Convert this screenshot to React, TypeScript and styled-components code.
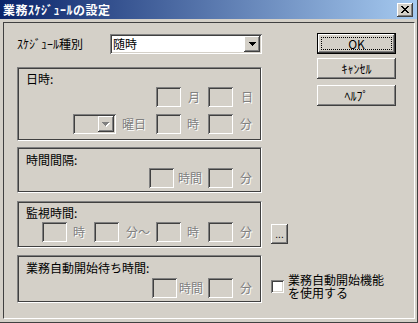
import React from "react";
import styled, { createGlobalStyle } from "styled-components";

const FACE = "#d4d0c8";
const DARK = "#404040";
const SHADOW = "#808080";

const Global = createGlobalStyle`
  html, body { margin: 0; padding: 0; background: ${FACE}; }
  body { width: 418px; height: 323px; overflow: hidden; }
`;

const Window = styled.div`
  width: 418px;
  height: 323px;
  box-sizing: border-box;
  background: ${FACE};
  display: flex;
  flex-direction: column;
  font-family: "MS UI Gothic", "Noto Sans CJK JP", sans-serif;
  font-size: 12px;
  color: #000;
  border-right: 1px solid ${DARK};
  border-bottom: 1px solid ${DARK};
`;

const TitleBar = styled.div`
  height: 19px;
  flex: none;
  background: linear-gradient(to right, #0a246a, #a6caf0);
  display: flex;
  align-items: center;
  justify-content: space-between;
  padding: 0 4px 0 3px;
`;

const Title = styled.div`
  color: #fff;
  font-weight: bold;
  font-size: 12px;
  line-height: 14px;
  letter-spacing: 0.5px;
`;

const raised = `
  box-shadow: inset -1px -1px ${DARK}, inset 1px 1px #fff, inset -2px -2px ${SHADOW}, inset 2px 2px ${FACE};
`;

const sunken = `
  box-shadow: inset 1px 1px ${SHADOW}, inset -1px -1px #fff, inset 2px 2px ${DARK}, inset -2px -2px ${FACE};
`;

const CloseBtn = styled.div`
  width: 16px;
  height: 14px;
  box-sizing: border-box;
  background: ${FACE};
  ${raised}
  display: flex;
  align-items: center;
  justify-content: center;
  padding-bottom: 1px;
`;

const Client = styled.div`
  flex: 1;
  margin: 3px 2px 3px 3px;
  border-top: 1px solid ${DARK};
  border-left: 1px solid ${DARK};
  border-right: 1px solid #fff;
  border-bottom: 1px solid #fff;
  display: grid;
  grid-template-columns: 300px 79px;
  align-content: start;
  padding: 10px 0 0 13px;
`;

const Main = styled.div`
  display: flex;
  flex-direction: column;
`;

const Side = styled.div`
  display: flex;
  flex-direction: column;
  align-self: start;
`;

const TopRow = styled.div`
  margin-top: 1px;
  height: 20px;
  display: flex;
  align-items: center;
`;

const FieldLabel = styled.div`
  width: 93px;
  line-height: 20px;
  white-space: nowrap;
`;

const Combo = styled.div<{ $w: number; $off?: boolean }>`
  width: ${(p) => p.$w}px;
  height: 20px;
  flex: none;
  box-sizing: border-box;
  background: ${(p) => (p.$off ? FACE : "#fff")};
  ${sunken}
  display: flex;
  align-items: center;
  padding: 2px 2px 2px 3px;
`;

const ComboText = styled.div`
  flex: 1;
  line-height: 16px;
`;

const DropBtn = styled.div`
  width: 16px;
  height: 16px;
  box-sizing: border-box;
  background: ${FACE};
  ${raised}
  display: flex;
  align-items: center;
  justify-content: center;
`;

const GroupLine = styled.div<{ $mt: number; $wide?: boolean }>`
  margin-top: ${(p) => p.$mt}px;
  display: flex;
  align-items: flex-end;
  ${(p) => (p.$wide ? "grid-column: 1 / -1;" : "")}
`;

const Group = styled.div<{ $h: number; $pt: number }>`
  width: 245px;
  flex: none;
  height: ${(p) => p.$h}px;
  box-sizing: border-box;
  border: 1px solid;
  border-color: ${SHADOW} #fff #fff ${SHADOW};
  box-shadow: inset 0 0 0 1px ${DARK};
  padding: ${(p) => p.$pt + 1}px 1px 0 8px;
  display: flex;
  flex-direction: column;
`;

const GroupTitle = styled.div`
  line-height: 14px;
  white-space: nowrap;
`;

const Row = styled.div<{ $mt: number }>`
  margin-top: ${(p) => p.$mt}px;
  height: 20px;
  display: flex;
  justify-content: flex-end;
`;

const Field = styled.div`
  width: 25px;
  height: 20px;
  flex: none;
  box-sizing: border-box;
  background: ${FACE};
  ${sunken}
`;

const Unit = styled.div<{ $w: number; $pl: number }>`
  width: ${(p) => p.$w}px;
  flex: none;
  padding-left: ${(p) => p.$pl}px;
  box-sizing: border-box;
  line-height: 20px;
  white-space: nowrap;
  color: ${SHADOW};
  text-shadow: 1px 1px 0 #fff;
`;

const Button = styled.div<{ $mt: number; $default?: boolean }>`
  margin-top: ${(p) => p.$mt}px;
  width: 79px;
  height: 21px;
  box-sizing: border-box;
  background: ${FACE};
  position: relative;
  display: flex;
  align-items: center;
  justify-content: center;
  line-height: 14px;
  ${(p) =>
    p.$default
      ? `border: 1px solid #000; box-shadow: inset -1px -1px ${DARK}, inset 1px 1px #fff, inset -2px -2px ${SHADOW}, inset 2px 2px ${FACE};`
      : raised}
`;

const FocusRect = styled.div`
  position: absolute;
  inset: 3px;
  border: 1px dotted #000;
`;

const SmallBtn = styled.div`
  margin: 0 0 4px 9px;
  width: 17px;
  height: 20px;
  flex: none;
  box-sizing: border-box;
  background: ${FACE};
  ${raised}
  display: flex;
  align-items: flex-end;
  justify-content: center;
  font-family: "Liberation Sans", sans-serif;
  font-size: 10px;
  line-height: 10px;
  padding-bottom: 4px;
`;

const CheckWrap = styled.div`
  margin: 0 0 4px 9px;
  flex: none;
  display: flex;
  align-items: center;
`;

const CheckBox = styled.div`
  width: 13px;
  height: 13px;
  box-sizing: border-box;
  background: #fff;
  ${sunken}
  flex: none;
`;

const CheckLabel = styled.div`
  margin-left: 4px;
  line-height: 13px;
  white-space: nowrap;
`;

const Pixels = ({ rows, color, shadow }: { rows: string[]; color: string; shadow?: string }) => {
  const w = rows[0].length + (shadow ? 1 : 0);
  const h = rows.length + (shadow ? 1 : 0);
  const rects: React.ReactNode[] = [];
  const draw = (dx: number, fill: string, key: string) =>
    rows.forEach((r, y) =>
      r.split("").forEach((c, x) => {
        if (c === "x") rects.push(<rect key={`${key}${x}-${y}`} x={x + dx} y={y + dx} width={1} height={1} fill={fill} />);
      })
    );
  if (shadow) draw(1, shadow, "s");
  draw(0, color, "m");
  return (
    <svg width={w} height={h} viewBox={`0 0 ${w} ${h}`} shapeRendering="crispEdges">
      {rects}
    </svg>
  );
};

const X_ROWS = ["xx....xx", ".xx..xx.", "..xxxx..", "...xx...", "..xxxx..", ".xx..xx.", "xx....xx"];
const ARROW_ROWS = ["xxxxxxx", ".xxxxx.", "..xxx..", "...x..."];

export default function App() {
  return (
    <>
      <Global />
      <Window>
        <TitleBar>
          <Title>業務ｽｹｼﾞｭｰﾙの設定</Title>
          <CloseBtn>
            <Pixels rows={X_ROWS} color="#000" />
          </CloseBtn>
        </TitleBar>
        <Client>
          <Main>
            <TopRow>
              <FieldLabel>ｽｹｼﾞｭｰﾙ種別</FieldLabel>
              <Combo $w={152}>
                <ComboText>随時</ComboText>
                <DropBtn>
                  <Pixels rows={ARROW_ROWS} color="#000" />
                </DropBtn>
              </Combo>
            </TopRow>

            <GroupLine $mt={13}>
              <Group $h={74} $pt={3}>
                <GroupTitle>日時:</GroupTitle>
                <Row $mt={1}>
                  <Field />
                  <Unit $w={27} $pl={7}>月</Unit>
                  <Field />
                  <Unit $w={27} $pl={8}>日</Unit>
                </Row>
                <Row $mt={7}>
                  <Combo $w={43} $off>
                    <ComboText />
                    <DropBtn>
                      <Pixels rows={ARROW_ROWS} color={SHADOW} shadow="#fff" />
                    </DropBtn>
                  </Combo>
                  <Unit $w={40} $pl={6}>曜日</Unit>
                  <Field />
                  <Unit $w={27} $pl={6}>時</Unit>
                  <Field />
                  <Unit $w={27} $pl={7}>分</Unit>
                </Row>
              </Group>
            </GroupLine>

            <GroupLine $mt={6}>
              <Group $h={46} $pt={4}>
                <GroupTitle>時間間隔:</GroupTitle>
                <Row $mt={1}>
                  <Field />
                  <Unit $w={34} $pl={4}>時間</Unit>
                  <Field />
                  <Unit $w={27} $pl={7}>分</Unit>
                </Row>
              </Group>
            </GroupLine>

            <GroupLine $mt={8}>
              <Group $h={47} $pt={3}>
                <GroupTitle>監視時間:</GroupTitle>
                <Row $mt={2}>
                  <Field />
                  <Unit $w={27} $pl={6}>時</Unit>
                  <Field />
                  <Unit $w={37} $pl={7}>分～</Unit>
                  <Field />
                  <Unit $w={27} $pl={6}>時</Unit>
                  <Field />
                  <Unit $w={27} $pl={7}>分</Unit>
                </Row>
              </Group>
              <SmallBtn>...</SmallBtn>
            </GroupLine>
          </Main>
          <Side>
            <Button $mt={0} $default>
              OK
              <FocusRect />
            </Button>
            <Button $mt={4}>ｷｬﾝｾﾙ</Button>
            <Button $mt={6}>ﾍﾙﾌﾟ</Button>
          </Side>

          <GroupLine $mt={7} $wide>
            <Group $h={48} $pt={4}>
              <GroupTitle>業務自動開始待ち時間:</GroupTitle>
              <Row $mt={3}>
                <Field />
                <Unit $w={31} $pl={2}>時間</Unit>
                <Field />
                <Unit $w={27} $pl={7}>分</Unit>
              </Row>
            </Group>
            <CheckWrap>
              <CheckBox />
              <CheckLabel>
                業務自動開始機能
                <br />
                を使用する
              </CheckLabel>
            </CheckWrap>
          </GroupLine>
        </Client>
      </Window>
    </>
  );
}
